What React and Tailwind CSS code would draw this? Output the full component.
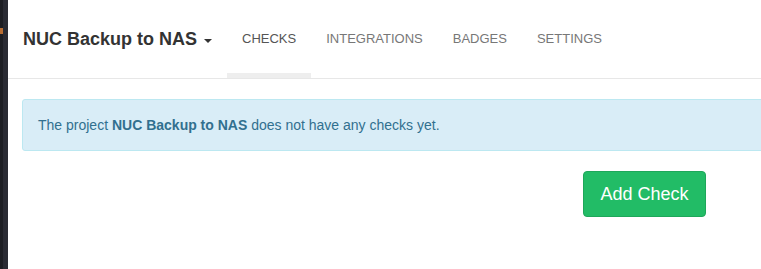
import React from "react";

const tabs = ["CHECKS", "INTEGRATIONS", "BADGES", "SETTINGS"];

export default function App() {
  return (
    <div className="flex min-h-[269px] bg-white font-['Liberation_Sans',Arial,sans-serif]">
      {/* dark editor strip on the left */}
      <div className="flex w-2 shrink-0">
        <div className="w-[3px] bg-[#1d1e23] pt-7">
          <div className="h-[6px] bg-[#b86d32]"></div>
        </div>
        <div className="w-[5px] bg-[#2a2b33]"></div>
      </div>

      <div className="flex-1 overflow-hidden">
        <nav className="flex h-[79px] items-stretch border-b border-[#e7e7e7] pl-[15px]">
          <div className="flex items-center pr-[15px] pt-[1px] text-[18px] font-bold text-[#333]">
            NUC Backup to NAS
            <span className="ml-[7px] mt-[2px] h-0 w-0 border-x-[4px] border-t-[4px] border-x-transparent border-t-[#333]"></span>
          </div>
          {tabs.map((t, i) => (
            <div
              key={t}
              className={
                i === 0
                  ? "flex items-center border-b-[5px] border-[#eee] px-[15px] pt-[5px] text-[13px] text-[#555]"
                  : "flex items-center border-b-[5px] border-transparent px-[15px] pt-[5px] text-[13px] text-[#777]"
              }
            >
              {t}
            </div>
          ))}
        </nav>

        <div className="pl-[14px]">
          <div className="mt-5 w-[800px] rounded-[3px] border border-[#bce8f1] bg-[#d9edf7] px-[15px] py-[15px] text-[14px] leading-5 text-[#31708f]">
            The project <b>NUC Backup to NAS</b> does not have any checks yet.
          </div>
          <div className="ml-[561px] mt-5">
            <button className="w-[123px] rounded-[4px] border border-[#1ea75a] bg-[#22bc66] py-[10px] text-[18px] leading-6 text-white">
              Add Check
            </button>
          </div>
        </div>
      </div>
    </div>
  );
}
